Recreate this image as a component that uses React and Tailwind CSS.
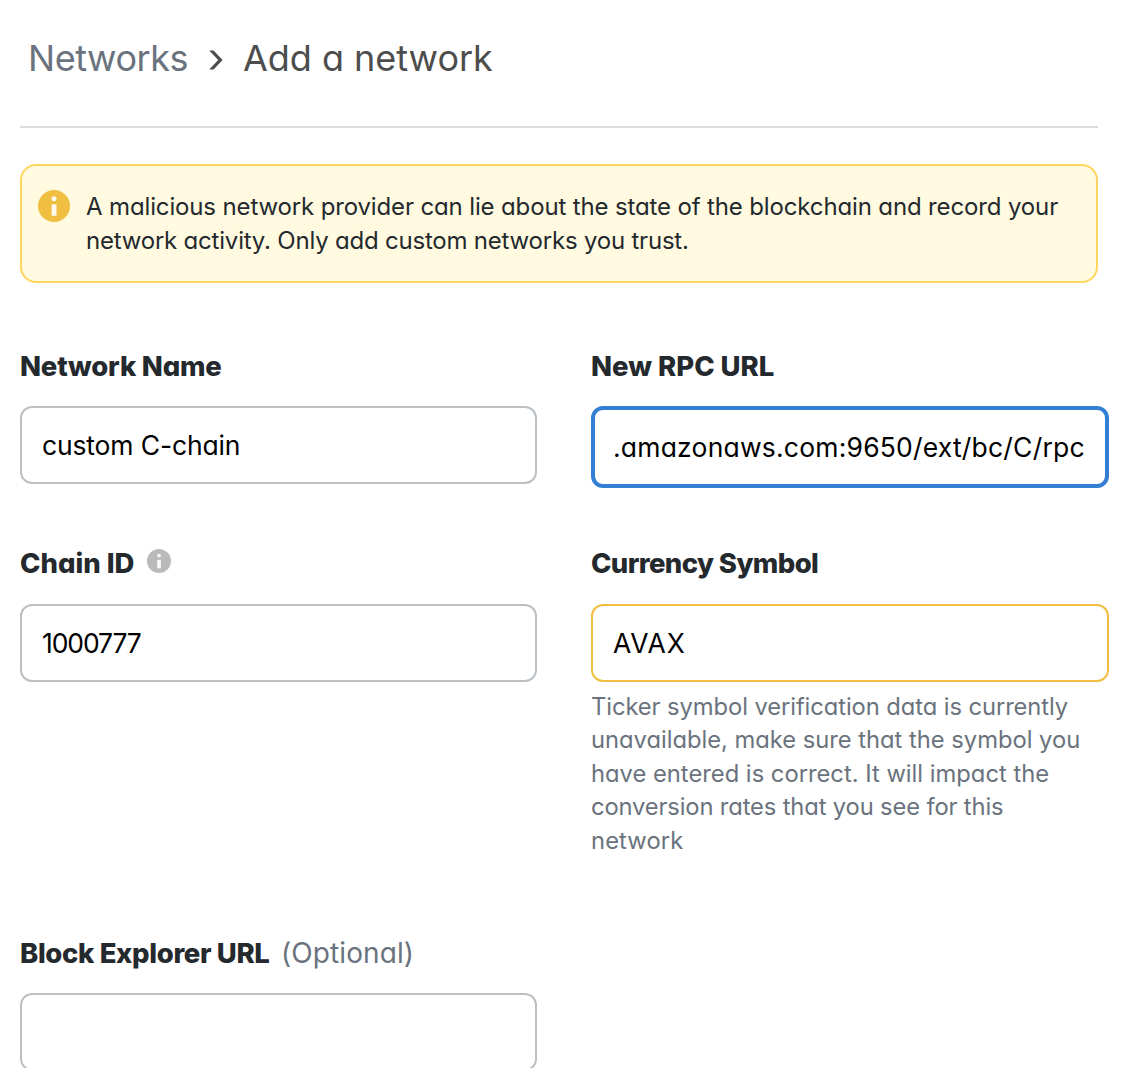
function InfoIcon({ className }) {
  return (
    <svg viewBox="0 0 32 32" className={className}>
      <circle cx="16" cy="16" r="16" fill="currentColor" />
      <circle cx="16" cy="8.8" r="2.5" fill="#fff" fillOpacity="0.9" />
      <rect x="13.6" y="14.4" width="4.9" height="11.4" fill="#fff" fillOpacity="0.9" />
    </svg>
  );
}

function Field({ label, labelClass, extra, value, valueClass = "", boxClass, children }) {
  return (
    <div className="flex flex-col">
      <div className="flex h-[36px] items-center whitespace-nowrap text-[27.5px] leading-[36px]">
        <span className={"font-extrabold text-[#24292e] " + labelClass}>{label}</span>
        {extra}
      </div>
      <div className={"flex items-center rounded-[12px] bg-white text-[26.5px] leading-[36px] text-black " + boxClass}>
        <span className={"whitespace-nowrap " + valueClass}>{value}</span>
      </div>
      {children}
    </div>
  );
}

const grayBox = "h-[78px] border-2 border-[#bbc0c5] px-[20px]";

export default function App() {
  return (
    <div className="h-[1068px] w-[1134px] overflow-hidden bg-white font-['Inter',sans-serif] [font-feature-settings:'cv11']">
      <header className="ml-[20px] flex h-[128px] w-[1078px] items-center whitespace-nowrap border-b-2 border-[#dcdcdc] pb-[10px] pl-[8px] text-[36px] leading-[44px]">
        <span className="w-[181px] tracking-[-0.45px] text-[#6a737d]">Networks</span>
        <svg viewBox="0 0 14 20" className="mt-[4px] h-[20px] w-[14px] text-[#4d4d4d]">
          <path d="M0.2 0.6H4.6L13.6 10 4.6 19.4H0.2L9.2 10Z" fill="currentColor" />
        </svg>
        <span className="ml-[20px] tracking-[-0.02px] text-[#4d4d4d]">Add a network</span>
      </header>

      <section className="ml-[20px] mt-[36px] flex h-[119px] w-[1078px] rounded-[16px] border-2 border-[#ffd55e] bg-[#fffae0] pl-[16px] pt-[24px]">
        <InfoIcon className="h-[32px] w-[32px] shrink-0 text-[#f0bf42]" />
        <div className="ml-[16px] whitespace-nowrap text-[24px] leading-[34px] text-[#24292e]">
          <p className="tracking-[-0.14px]">A malicious network provider can lie about the state of the blockchain and record your</p>
          <p className="tracking-[-0.21px]">network activity. Only add custom networks you trust.</p>
        </div>
      </section>

      <main className="ml-[20px] mt-[65px] grid grid-cols-[517px_518px] grid-rows-[197px_390px_150px] gap-x-[54px]">
        <Field label="Network Name" labelClass="tracking-[-0.2px]" value="custom C-chain" valueClass="tracking-[-0.15px]" boxClass={"mt-[22px] " + grayBox} />
        <Field label="New RPC URL" labelClass="tracking-[0px]" value=".amazonaws.com:9650/ext/bc/C/rpc" valueClass="tracking-[0.2px]" boxClass="mt-[22px] h-[82px] border-4 border-[#327fd3] px-[18px]" />
        <Field
          label="Chain ID"
          labelClass="w-[115px] tracking-[0px]"
          value="1000777"
          valueClass="tracking-[-1.1px]"
          boxClass={"mt-[23px] " + grayBox}
          extra={<InfoIcon className="mb-[4px] ml-[12px] h-[24px] w-[24px] text-[#bababa]" />}
        />
        <Field label="Currency Symbol" labelClass="tracking-[-0.6px]" value="AVAX" valueClass="tracking-[0.8px]" boxClass="mt-[23px] h-[78px] border-2 border-[#f0bf42] px-[20px]">
          <div className="mt-[7.75px] whitespace-nowrap text-[23.75px] leading-[33.5px] text-[#6a737d]">
            <p className="tracking-[-0.08px]">Ticker symbol verification data is currently</p>
            <p className="tracking-[-0.02px]">unavailable, make sure that the symbol you</p>
            <p className="tracking-[0px]">have entered is correct. It will impact the</p>
            <p className="tracking-[-0.14px]">conversion rates that you see for this</p>
            <p className="tracking-[0.1px]">network</p>
          </div>
        </Field>
        <Field
          label="Block Explorer URL"
          labelClass="w-[250px] tracking-[-0.35px]"
          value=""
          boxClass={"mt-[22px] " + grayBox}
          extra={<span className="ml-[11px] text-[28px] tracking-[0.1px] text-[#6a737d]">(Optional)</span>}
        />
      </main>
    </div>
  );
}
